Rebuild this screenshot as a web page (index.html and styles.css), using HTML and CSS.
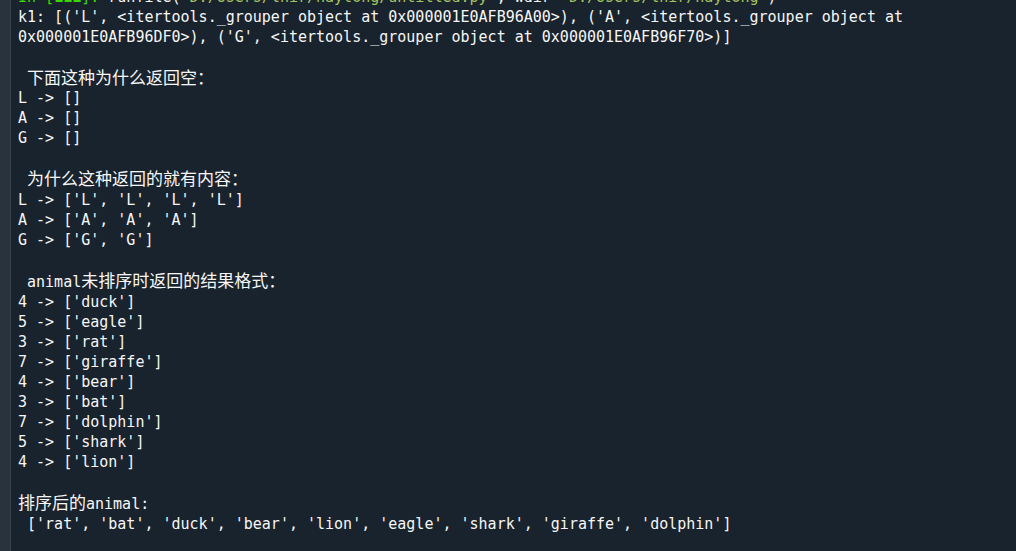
FILE: index.html
```html
<!DOCTYPE html>
<html lang="zh">
<head>
<meta charset="utf-8">
<title>Console</title>
<link rel="stylesheet" href="styles.css">
</head>
<body>
<div class="app">
  <div class="gutter"></div>
  <div class="console">
    <div class="line prompt-line"><span class="prompt">In [</span><span class="prompt-num">111</span><span class="prompt">]:</span> runfile(<span class="str">'D:/Users/lnir/haytong/untitled.py'</span>, wdir=<span class="str">'D:/Users/lnir/haytong'</span>)</div>
    <div class="line">k1: [('L', &lt;itertools._grouper object at 0x000001E0AFB96A00&gt;), ('A', &lt;itertools._grouper object at</div>
    <div class="line">0x000001E0AFB96DF0&gt;), ('G', &lt;itertools._grouper object at 0x000001E0AFB96F70&gt;)]</div>
    <div class="line"> </div>
    <div class="line zh first-zh"> <span class="cjk">下面这种为什么返回空：</span></div>
    <div class="line">L -&gt; []</div>
    <div class="line">A -&gt; []</div>
    <div class="line">G -&gt; []</div>
    <div class="line"> </div>
    <div class="line zh"> <span class="cjk">为什么这种返回的就有内容：</span></div>
    <div class="line">L -&gt; ['L', 'L', 'L', 'L']</div>
    <div class="line">A -&gt; ['A', 'A', 'A']</div>
    <div class="line">G -&gt; ['G', 'G']</div>
    <div class="line"> </div>
    <div class="line zh"> animal<span class="cjk">未排序时返回的结果格式：</span></div>
    <div class="line">4 -&gt; ['duck']</div>
    <div class="line">5 -&gt; ['eagle']</div>
    <div class="line">3 -&gt; ['rat']</div>
    <div class="line">7 -&gt; ['giraffe']</div>
    <div class="line">4 -&gt; ['bear']</div>
    <div class="line">3 -&gt; ['bat']</div>
    <div class="line">7 -&gt; ['dolphin']</div>
    <div class="line">5 -&gt; ['shark']</div>
    <div class="line">4 -&gt; ['lion']</div>
    <div class="line"> </div>
    <div class="line zh"><span class="cjk">排序后的</span>animal:</div>
    <div class="line"> ['rat', 'bat', 'duck', 'bear', 'lion', 'eagle', 'shark', 'giraffe', 'dolphin']</div>
  </div>
</div>
</body>
</html>
```

FILE: styles.css
```css
html, body {
  margin: 0;
  padding: 0;
  height: 100%;
  background: #19232d;
  overflow: hidden;
}

.app {
  display: flex;
  height: 100vh;
}

.gutter {
  flex: 0 0 10px;
  background: #29333d;
  border-right: 1px solid #36424d;
}

.console {
  flex: 1;
  padding-left: 7px;
  margin-top: -13px;
  color: #f6f6f6;
  font-family: "DejaVu Sans Mono", "Noto Sans CJK SC", monospace;
  font-size: 15px;
}

.line {
  white-space: pre;
  height: 20px;
  line-height: 20px;
}

.line.zh {
  height: 22px;
  line-height: 19px;
}

.line.first-zh {
  height: 21px;
}

.cjk {
  font-family: "Noto Sans CJK SC", sans-serif;
  font-size: 17px;
}

.prompt {
  color: #3ad900;
}

.prompt-num {
  color: #3ad900;
  font-weight: bold;
}

.str {
  color: #a5c261;
}
```
